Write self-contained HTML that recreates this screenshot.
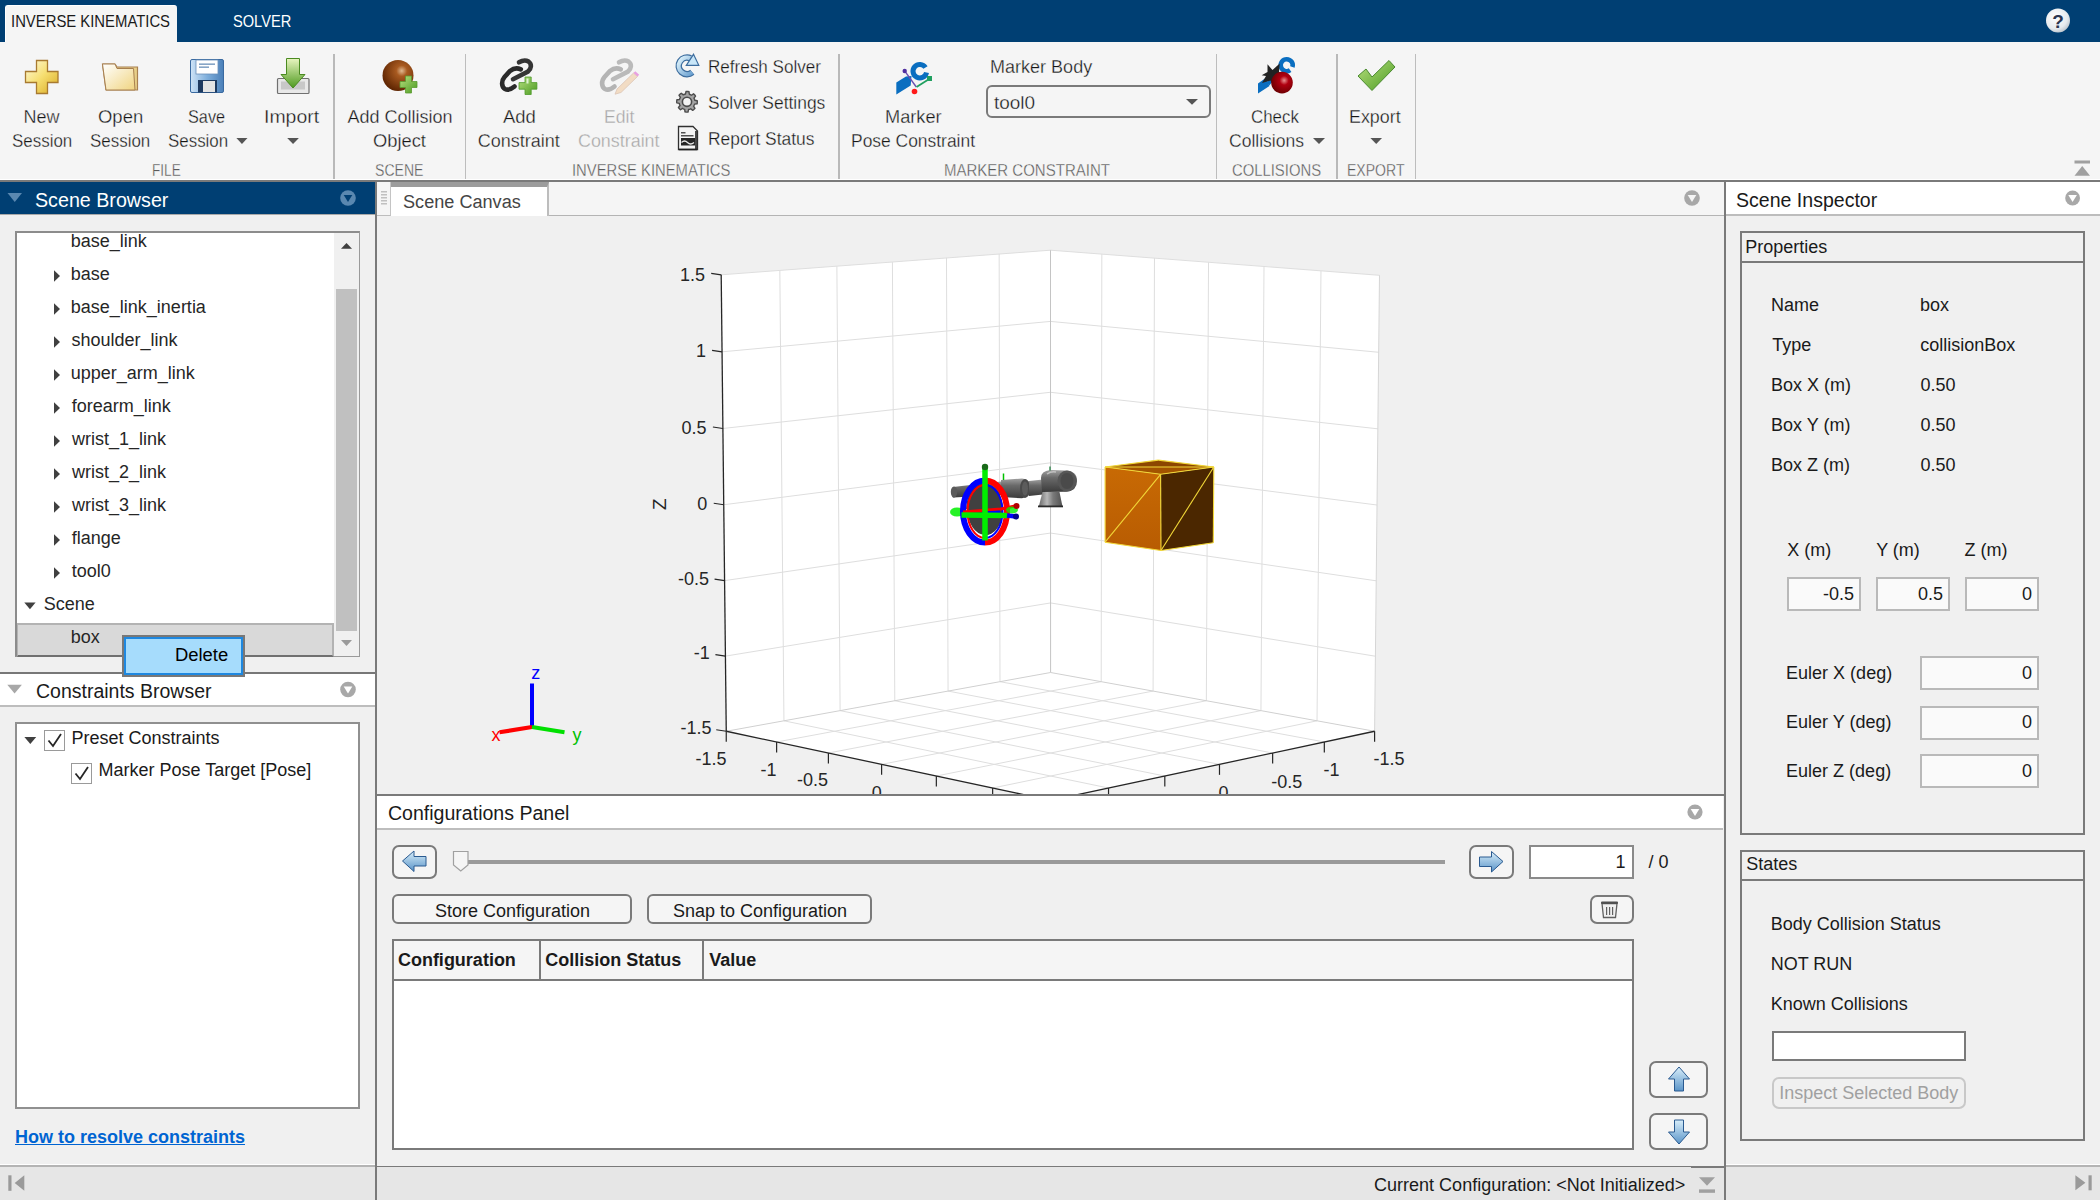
<!DOCTYPE html>
<html><head><meta charset="utf-8"><title>Inverse Kinematics Designer</title>
<style>
html,body{margin:0;padding:0;}
body{width:2100px;height:1200px;position:relative;overflow:hidden;background:#f0f0f0;font-family:"Liberation Sans",sans-serif;}
.a{position:absolute;box-sizing:border-box;}
.t{position:absolute;white-space:nowrap;line-height:1;transform-origin:0 0;}
svg{position:absolute;overflow:visible;}

</style></head><body>
<div class="a" style="left:0px;top:0px;width:2100px;height:42px;background:#003f73;"></div>
<div class="a" style="left:5px;top:5px;width:172px;height:37px;background:#f5f5f5;border-radius:3px 3px 0 0;border-top:1px solid #fff;border-left:1px solid #fff;"></div>
<div class="t" style="left:10.95px;top:13px;font-size:16.5px;color:#1a1a1a;transform:scaleX(0.9002);">INVERSE KINEMATICS</div>
<div class="t" style="left:232.69px;top:13px;font-size:16.5px;color:#ffffff;transform:scaleX(0.8861);">SOLVER</div>
<div class="a" style="left:0px;top:42px;width:2100px;height:137px;background:#f5f5f5;"></div>
<div class="a" style="left:0px;top:179px;width:2100px;height:1px;background:#ffffff;"></div>
<div class="a" style="left:0px;top:180px;width:2100px;height:2px;background:#7a7a7a;"></div>
<div class="a" style="left:333px;top:54px;width:2px;height:125px;background:#b9b9b9;"></div>
<div class="a" style="left:465px;top:54px;width:1px;height:125px;background:#bdbdbd;"></div>
<div class="a" style="left:838px;top:54px;width:2px;height:125px;background:#b9b9b9;"></div>
<div class="a" style="left:1216px;top:54px;width:1px;height:125px;background:#bdbdbd;"></div>
<div class="a" style="left:1336px;top:54px;width:2px;height:125px;background:#b9b9b9;"></div>
<div class="a" style="left:1415px;top:54px;width:1px;height:125px;background:#bdbdbd;"></div>
<div class="t" style="left:23.50px;top:108px;font-size:18px;color:#151515;-webkit-text-stroke:0.3px #f5f5f5;">New</div>
<div class="t" style="left:12.05px;top:132px;font-size:18px;color:#151515;transform:scaleX(0.9404);-webkit-text-stroke:0.3px #f5f5f5;">Session</div>
<div class="t" style="left:97.78px;top:108px;font-size:18px;color:#151515;transform:scaleX(1.0261);-webkit-text-stroke:0.3px #f5f5f5;">Open</div>
<div class="t" style="left:90.25px;top:132px;font-size:18px;color:#151515;transform:scaleX(0.9404);-webkit-text-stroke:0.3px #f5f5f5;">Session</div>
<div class="t" style="left:187.88px;top:108px;font-size:18px;color:#151515;transform:scaleX(0.9036);-webkit-text-stroke:0.3px #f5f5f5;">Save</div>
<div class="t" style="left:168.00px;top:132px;font-size:18px;color:#151515;transform:scaleX(0.9396);-webkit-text-stroke:0.3px #f5f5f5;">Session</div>
<div class="t" style="left:263.77px;top:108px;font-size:18px;color:#151515;transform:scaleX(1.0793);-webkit-text-stroke:0.3px #f5f5f5;">Import</div>
<div class="t" style="left:347.50px;top:108px;font-size:18px;color:#151515;-webkit-text-stroke:0.3px #f5f5f5;">Add Collision</div>
<div class="t" style="left:372.89px;top:132px;font-size:18px;color:#151515;transform:scaleX(1.0176);-webkit-text-stroke:0.3px #f5f5f5;">Object</div>
<div class="t" style="left:503.00px;top:108px;font-size:18px;color:#151515;transform:scaleX(1.0259);-webkit-text-stroke:0.3px #f5f5f5;">Add</div>
<div class="t" style="left:477.80px;top:132px;font-size:18px;color:#151515;-webkit-text-stroke:0.3px #f5f5f5;">Constraint</div>
<div class="t" style="left:603.53px;top:108px;font-size:18px;color:#a6a6a6;transform:scaleX(0.9796);-webkit-text-stroke:0.3px #f5f5f5;">Edit</div>
<div class="t" style="left:578.11px;top:132px;font-size:18px;color:#a6a6a6;transform:scaleX(0.9938);-webkit-text-stroke:0.3px #f5f5f5;">Constraint</div>
<div class="t" style="left:707.58px;top:58px;font-size:18px;color:#151515;transform:scaleX(0.9497);-webkit-text-stroke:0.3px #f5f5f5;">Refresh Solver</div>
<div class="t" style="left:708.22px;top:94px;font-size:18px;color:#151515;transform:scaleX(0.9691);-webkit-text-stroke:0.3px #f5f5f5;">Solver Settings</div>
<div class="t" style="left:707.55px;top:130px;font-size:18px;color:#151515;transform:scaleX(0.9667);-webkit-text-stroke:0.3px #f5f5f5;">Report Status</div>
<div class="t" style="left:885.08px;top:108px;font-size:18px;color:#151515;transform:scaleX(1.0111);-webkit-text-stroke:0.3px #f5f5f5;">Marker</div>
<div class="t" style="left:851.35px;top:132px;font-size:18px;color:#151515;transform:scaleX(0.9684);-webkit-text-stroke:0.3px #f5f5f5;">Pose Constraint</div>
<div class="t" style="left:990.11px;top:58px;font-size:18px;color:#151515;-webkit-text-stroke:0.3px #f5f5f5;">Marker Body</div>
<div class="t" style="left:993.68px;top:94px;font-size:18px;color:#151515;transform:scaleX(1.0526);-webkit-text-stroke:0.3px #f5f5f5;">tool0</div>
<div class="t" style="left:1251.16px;top:108px;font-size:18px;color:#151515;transform:scaleX(0.9381);-webkit-text-stroke:0.3px #f5f5f5;">Check</div>
<div class="t" style="left:1228.92px;top:132px;font-size:18px;color:#151515;transform:scaleX(0.9735);-webkit-text-stroke:0.3px #f5f5f5;">Collisions</div>
<div class="t" style="left:1348.51px;top:108px;font-size:18px;color:#151515;transform:scaleX(0.9921);-webkit-text-stroke:0.3px #f5f5f5;">Export</div>
<div class="t" style="left:152.30px;top:163px;font-size:16px;color:#5a5a5a;transform:scaleX(0.8491);-webkit-text-stroke:0.3px #f5f5f5;">FILE</div>
<div class="t" style="left:375.38px;top:163px;font-size:16px;color:#5a5a5a;transform:scaleX(0.8792);-webkit-text-stroke:0.3px #f5f5f5;">SCENE</div>
<div class="t" style="left:572.31px;top:163px;font-size:16px;color:#5a5a5a;transform:scaleX(0.9249);-webkit-text-stroke:0.3px #f5f5f5;">INVERSE KINEMATICS</div>
<div class="t" style="left:944.28px;top:163px;font-size:16px;color:#5a5a5a;transform:scaleX(0.9378);-webkit-text-stroke:0.3px #f5f5f5;">MARKER CONSTRAINT</div>
<div class="t" style="left:1231.96px;top:163px;font-size:16px;color:#5a5a5a;transform:scaleX(0.9270);-webkit-text-stroke:0.3px #f5f5f5;">COLLISIONS</div>
<div class="t" style="left:1347.06px;top:163px;font-size:16px;color:#5a5a5a;transform:scaleX(0.8777);-webkit-text-stroke:0.3px #f5f5f5;">EXPORT</div>
<div class="a" style="left:986px;top:85px;width:225px;height:33px;border:2px solid #7a7a7a;border-radius:6px;"></div>
<div class="a" style="left:0px;top:182px;width:375px;height:32px;background:#003f73;"></div>
<div class="a" style="left:0px;top:214px;width:375px;height:1px;background:#a9a9a9;"></div>
<div class="t" style="left:35.31px;top:190px;font-size:20px;color:#ffffff;transform:scaleX(0.9836);">Scene Browser</div>
<div class="a" style="left:15px;top:231px;width:345px;height:426px;background:#ffffff;border-top:2px solid #8c8c8c;border-left:2px solid #8c8c8c;border-right:1px solid #9a9a9a;border-bottom:1px solid #9a9a9a;"></div>
<div class="a" style="left:334px;top:233px;width:25px;height:423px;background:#f0f0f0;"></div>
<div class="a" style="left:336px;top:289px;width:21px;height:342px;background:#c0c0c0;"></div>
<div class="a" style="left:17px;top:623px;width:317px;height:34px;background:#d9d9d9;border-top:2px solid #b3b3b3;border-right:2px solid #b3b3b3;border-bottom:2px solid #707070;border-left:1px solid #b3b3b3;"></div>
<div class="t" style="left:70.80px;top:232px;font-size:18px;color:#262626;">base_link</div>
<div class="t" style="left:70.80px;top:265px;font-size:18px;color:#262626;">base</div>
<div class="t" style="left:70.80px;top:298px;font-size:18px;color:#262626;">base_link_inertia</div>
<div class="t" style="left:71.50px;top:331px;font-size:18px;color:#262626;">shoulder_link</div>
<div class="t" style="left:70.80px;top:364px;font-size:18px;color:#262626;">upper_arm_link</div>
<div class="t" style="left:71.80px;top:397px;font-size:18px;color:#262626;">forearm_link</div>
<div class="t" style="left:72.00px;top:430px;font-size:18px;color:#262626;">wrist_1_link</div>
<div class="t" style="left:72.00px;top:463px;font-size:18px;color:#262626;">wrist_2_link</div>
<div class="t" style="left:72.00px;top:496px;font-size:18px;color:#262626;">wrist_3_link</div>
<div class="t" style="left:71.80px;top:529px;font-size:18px;color:#262626;">flange</div>
<div class="t" style="left:71.70px;top:562px;font-size:18px;color:#262626;">tool0</div>
<div class="t" style="left:43.70px;top:595px;font-size:18px;color:#262626;">Scene</div>
<div class="t" style="left:70.70px;top:628px;font-size:18px;color:#262626;">box</div>
<div class="a" style="left:0px;top:672px;width:375px;height:2px;background:#777777;"></div>
<div class="a" style="left:0px;top:674px;width:375px;height:31px;background:#ffffff;"></div>
<div class="a" style="left:0px;top:705px;width:375px;height:2px;background:#bdbdbd;"></div>
<div class="t" style="left:35.83px;top:681px;font-size:20px;color:#1a1a1a;transform:scaleX(0.9748);">Constraints Browser</div>
<div class="a" style="left:15px;top:722px;width:345px;height:387px;background:#ffffff;border:2px solid #909090;"></div>
<div class="a" style="left:44px;top:730px;width:21px;height:21px;background:#ffffff;border:1px solid #9a9a9a;"></div>
<div class="a" style="left:71px;top:763px;width:21px;height:21px;background:#ffffff;border:1px solid #9a9a9a;"></div>
<div class="t" style="left:71.50px;top:729px;font-size:18px;color:#1a1a1a;">Preset Constraints</div>
<div class="t" style="left:98.60px;top:761px;font-size:18px;color:#1a1a1a;">Marker Pose Target [Pose]</div>
<div class="a" style="left:122px;top:635px;width:123px;height:42px;background:#a6dcfc;border:2px solid #787878;box-shadow:inset 0 0 0 2px #1e88e0;"></div>
<div class="t" style="left:175.27px;top:646px;font-size:18px;color:#000000;transform:scaleX(1.0221);">Delete</div>
<div class="t" style="left:15.00px;top:1128px;font-size:18px;color:#0064d2;font-weight:bold;">How to resolve constraints</div>
<div class="a" style="left:15px;top:1144px;width:230px;height:1px;background:#0064d2;"></div>
<div class="a" style="left:0px;top:1164px;width:2100px;height:1px;background:#ffffff;"></div>
<div class="a" style="left:0px;top:1165px;width:2100px;height:2px;background:#b4b4b4;"></div>
<div class="a" style="left:377px;top:1164px;width:1347px;height:2px;background:#f0f0f0;"></div>
<div class="a" style="left:377px;top:1166px;width:1347px;height:1px;background:#7a7a7a;"></div>
<div class="a" style="left:1691px;top:1166px;width:33px;height:2px;background:#7a7a7a;"></div>
<div class="a" style="left:0px;top:1167px;width:2100px;height:33px;background:#e6e6e6;"></div>
<div class="a" style="left:1691px;top:1167px;width:33px;height:1px;background:#7a7a7a;"></div>
<div class="a" style="left:375px;top:182px;width:2px;height:1018px;background:#7a7a7a;"></div>
<div class="a" style="left:1724px;top:182px;width:2px;height:1018px;background:#7a7a7a;"></div>
<div class="t" style="left:1374.10px;top:1176px;font-size:18px;color:#1a1a1a;">Current Configuration: &lt;Not Initialized&gt;</div>
<div class="a" style="left:377px;top:182px;width:1347px;height:33px;background:#f5f5f5;"></div>
<div class="a" style="left:377px;top:215px;width:1347px;height:1px;background:#b4b4b4;"></div>
<div class="a" style="left:377px;top:182px;width:14px;height:34px;background:#f5f5f5;border-right:1px solid #c4c4c4;border-bottom:1px solid #bdbdbd;"></div>
<div class="a" style="left:391px;top:182px;width:158px;height:34px;background:#ffffff;border-top:5px solid #9c9c9c;border-right:2px solid #bdbdbd;"></div>
<div class="t" style="left:402.80px;top:193px;font-size:18px;color:#454545;transform:scaleX(1.0061);">Scene Canvas</div>
<div class="a" style="left:377px;top:216px;width:1347px;height:578px;background:#f0f0f0;"></div>
<div class="a" style="left:377px;top:794px;width:1347px;height:2px;background:#7a7a7a;"></div>
<div class="a" style="left:377px;top:796px;width:1346px;height:32px;background:#ffffff;"></div>
<div class="a" style="left:377px;top:828px;width:1346px;height:2px;background:#bdbdbd;"></div>
<div class="t" style="left:388.42px;top:803px;font-size:20px;color:#1a1a1a;transform:scaleX(0.9771);">Configurations Panel</div>
<div class="a" style="left:392px;top:845px;width:45px;height:34px;background:#f5f5f5;border:2px solid #7a7a7a;border-radius:7px;"></div>
<div class="a" style="left:1469px;top:845px;width:45px;height:34px;background:#f5f5f5;border:2px solid #7a7a7a;border-radius:7px;"></div>
<div class="a" style="left:468px;top:860px;width:977px;height:4px;background:#9a9a9a;"></div>
<div class="a" style="left:1529px;top:845px;width:105px;height:34px;background:#ffffff;border:2px solid #8a8a8a;"></div>
<div class="t" style="left:1615.50px;top:853px;font-size:18px;color:#1a1a1a;">1</div>
<div class="t" style="left:1648.60px;top:853px;font-size:18px;color:#1a1a1a;">/ 0</div>
<div class="a" style="left:392px;top:894px;width:240px;height:30px;background:#f5f5f5;border:2px solid #7a7a7a;border-radius:6px;"></div>
<div class="t" style="left:435.00px;top:902px;font-size:18px;color:#1a1a1a;">Store Configuration</div>
<div class="a" style="left:647px;top:894px;width:225px;height:30px;background:#f5f5f5;border:2px solid #7a7a7a;border-radius:6px;"></div>
<div class="t" style="left:673.00px;top:902px;font-size:18px;color:#1a1a1a;">Snap to Configuration</div>
<div class="a" style="left:1590px;top:895px;width:44px;height:29px;background:#f5f5f5;border:2px solid #7a7a7a;border-radius:7px;"></div>
<div class="a" style="left:392px;top:939px;width:242px;height:211px;background:#ffffff;border:2px solid #7a7a7a;"></div>
<div class="a" style="left:392px;top:939px;width:1242px;height:211px;background:#ffffff;border:2px solid #7a7a7a;"></div>
<div class="a" style="left:394px;top:941px;width:1238px;height:38px;background:#f5f5f5;"></div>
<div class="a" style="left:394px;top:979px;width:1238px;height:2px;background:#7a7a7a;"></div>
<div class="a" style="left:539px;top:941px;width:2px;height:38px;background:#7a7a7a;"></div>
<div class="a" style="left:702px;top:941px;width:2px;height:38px;background:#7a7a7a;"></div>
<div class="t" style="left:397.90px;top:951px;font-size:18px;color:#1a1a1a;font-weight:bold;">Configuration</div>
<div class="t" style="left:545.20px;top:951px;font-size:18px;color:#1a1a1a;font-weight:bold;">Collision Status</div>
<div class="t" style="left:709.20px;top:951px;font-size:18px;color:#1a1a1a;font-weight:bold;">Value</div>
<div class="a" style="left:1649px;top:1061px;width:59px;height:37px;background:#f5f5f5;border:2px solid #7a7a7a;border-radius:7px;"></div>
<div class="a" style="left:1649px;top:1113px;width:59px;height:37px;background:#f5f5f5;border:2px solid #7a7a7a;border-radius:7px;"></div>
<div class="a" style="left:1726px;top:182px;width:374px;height:32px;background:#ffffff;"></div>
<div class="a" style="left:1726px;top:214px;width:374px;height:2px;background:#bdbdbd;"></div>
<div class="t" style="left:1736.42px;top:190px;font-size:20px;color:#1a1a1a;transform:scaleX(0.9770);">Scene Inspector</div>
<div class="a" style="left:1740px;top:231px;width:345px;height:604px;border:2px solid #7a7a7a;"></div>
<div class="a" style="left:1742px;top:261px;width:341px;height:2px;background:#7a7a7a;"></div>
<div class="t" style="left:1745.20px;top:238px;font-size:18px;color:#1a1a1a;">Properties</div>
<div class="t" style="left:1771.10px;top:296px;font-size:18px;color:#1a1a1a;">Name</div>
<div class="t" style="left:1919.90px;top:296px;font-size:18px;color:#1a1a1a;">box</div>
<div class="t" style="left:1772.20px;top:336px;font-size:18px;color:#1a1a1a;">Type</div>
<div class="t" style="left:1920.30px;top:336px;font-size:18px;color:#1a1a1a;">collisionBox</div>
<div class="t" style="left:1771.10px;top:376px;font-size:18px;color:#1a1a1a;">Box X (m)</div>
<div class="t" style="left:1920.40px;top:376px;font-size:18px;color:#1a1a1a;">0.50</div>
<div class="t" style="left:1771.10px;top:416px;font-size:18px;color:#1a1a1a;">Box Y (m)</div>
<div class="t" style="left:1920.40px;top:416px;font-size:18px;color:#1a1a1a;">0.50</div>
<div class="t" style="left:1771.10px;top:456px;font-size:18px;color:#1a1a1a;">Box Z (m)</div>
<div class="t" style="left:1920.40px;top:456px;font-size:18px;color:#1a1a1a;">0.50</div>
<div class="t" style="left:1787.20px;top:541px;font-size:18px;color:#1a1a1a;">X (m)</div>
<div class="t" style="left:1876.20px;top:541px;font-size:18px;color:#1a1a1a;">Y (m)</div>
<div class="t" style="left:1964.40px;top:541px;font-size:18px;color:#1a1a1a;">Z (m)</div>
<div class="a" style="left:1787px;top:577px;width:74px;height:34px;background:#fafafa;border:2px solid #b9b9b9;"></div>
<div class="t" style="left:1823.00px;top:585px;font-size:18px;color:#1a1a1a;">-0.5</div>
<div class="a" style="left:1876px;top:577px;width:74px;height:34px;background:#fafafa;border:2px solid #b9b9b9;"></div>
<div class="t" style="left:1917.90px;top:585px;font-size:18px;color:#1a1a1a;">0.5</div>
<div class="a" style="left:1965px;top:577px;width:74px;height:34px;background:#fafafa;border:2px solid #b9b9b9;"></div>
<div class="t" style="left:2021.90px;top:585px;font-size:18px;color:#1a1a1a;">0</div>
<div class="t" style="left:1786.10px;top:664px;font-size:18px;color:#1a1a1a;">Euler X (deg)</div>
<div class="a" style="left:1920px;top:656px;width:119px;height:34px;background:#fafafa;border:2px solid #b9b9b9;"></div>
<div class="t" style="left:2021.90px;top:664px;font-size:18px;color:#1a1a1a;">0</div>
<div class="t" style="left:1786.10px;top:713px;font-size:18px;color:#1a1a1a;">Euler Y (deg)</div>
<div class="a" style="left:1920px;top:706px;width:119px;height:34px;background:#fafafa;border:2px solid #b9b9b9;"></div>
<div class="t" style="left:2021.90px;top:713px;font-size:18px;color:#1a1a1a;">0</div>
<div class="t" style="left:1786.10px;top:762px;font-size:18px;color:#1a1a1a;">Euler Z (deg)</div>
<div class="a" style="left:1920px;top:754px;width:119px;height:34px;background:#fafafa;border:2px solid #b9b9b9;"></div>
<div class="t" style="left:2021.90px;top:762px;font-size:18px;color:#1a1a1a;">0</div>
<div class="a" style="left:1740px;top:850px;width:345px;height:291px;border:2px solid #7a7a7a;"></div>
<div class="a" style="left:1742px;top:879px;width:341px;height:2px;background:#7a7a7a;"></div>
<div class="t" style="left:1746.20px;top:855px;font-size:18px;color:#1a1a1a;">States</div>
<div class="t" style="left:1770.70px;top:915px;font-size:18px;color:#1a1a1a;">Body Collision Status</div>
<div class="t" style="left:1770.70px;top:955px;font-size:18px;color:#1a1a1a;">NOT RUN</div>
<div class="t" style="left:1770.70px;top:995px;font-size:18px;color:#1a1a1a;">Known Collisions</div>
<div class="a" style="left:1772px;top:1031px;width:194px;height:30px;background:#ffffff;border:2px solid #7a7a7a;"></div>
<div class="a" style="left:1772px;top:1077px;width:194px;height:32px;background:#f0f0f0;border:2px solid #c8c8c8;border-radius:7px;"></div>
<div class="t" style="left:1779.20px;top:1084px;font-size:18px;color:#a0a0a0;">Inspect Selected Body</div>
<svg style="left:0;top:0" width="2100" height="1200" viewBox="0 0 2100 1200" font-family="Liberation Sans">
<defs><clipPath id="cv"><rect x="377" y="216" width="1347" height="578"/></clipPath></defs>
<g clip-path="url(#cv)">
<polygon points="721.20,274.80 1050.50,250.20 1050.60,672.50 726.25,731.25" fill="#ffffff" />
<polygon points="1050.50,250.20 1379.50,275.30 1374.60,731.25 1050.60,672.50" fill="#ffffff" />
<polygon points="1050.60,672.50 726.25,731.25 1050.60,800.38 1374.60,731.25" fill="#ffffff" />
<line x1="721.20" y1="274.80" x2="1050.50" y2="250.20" stroke="#dedede" stroke-width="1" />
<line x1="1050.50" y1="250.20" x2="1379.50" y2="275.30" stroke="#dedede" stroke-width="1" />
<line x1="779.83" y1="270.42" x2="783.94" y2="720.80" stroke="#dedede" stroke-width="1" />
<line x1="1101.83" y1="254.12" x2="1101.20" y2="681.68" stroke="#dedede" stroke-width="1" />
<line x1="722.05" y1="351.84" x2="1050.52" y2="321.41" stroke="#dedede" stroke-width="1" />
<line x1="1050.52" y1="321.42" x2="1378.67" y2="352.27" stroke="#dedede" stroke-width="1" />
<line x1="999.99" y1="681.67" x2="1324.32" y2="741.98" stroke="#dedede" stroke-width="1" />
<line x1="1101.20" y1="681.68" x2="776.62" y2="741.99" stroke="#dedede" stroke-width="1" />
<line x1="836.88" y1="266.16" x2="840.10" y2="710.63" stroke="#dedede" stroke-width="1" />
<line x1="1154.49" y1="258.13" x2="1153.09" y2="691.08" stroke="#dedede" stroke-width="1" />
<line x1="722.90" y1="428.49" x2="1050.53" y2="392.28" stroke="#dedede" stroke-width="1" />
<line x1="1050.53" y1="392.30" x2="1377.85" y2="428.84" stroke="#dedede" stroke-width="1" />
<line x1="948.07" y1="691.07" x2="1272.64" y2="753.00" stroke="#dedede" stroke-width="1" />
<line x1="1153.09" y1="691.08" x2="828.39" y2="753.02" stroke="#dedede" stroke-width="1" />
<line x1="892.41" y1="262.01" x2="894.79" y2="700.72" stroke="#dedede" stroke-width="1" />
<line x1="1208.53" y1="262.26" x2="1206.33" y2="700.74" stroke="#dedede" stroke-width="1" />
<line x1="723.74" y1="504.75" x2="1050.55" y2="462.82" stroke="#dedede" stroke-width="1" />
<line x1="1050.55" y1="462.85" x2="1377.03" y2="505.02" stroke="#dedede" stroke-width="1" />
<line x1="894.79" y1="700.72" x2="1219.49" y2="764.34" stroke="#dedede" stroke-width="1" />
<line x1="1206.33" y1="700.74" x2="881.61" y2="764.36" stroke="#dedede" stroke-width="1" />
<line x1="946.49" y1="257.97" x2="948.07" y2="691.07" stroke="#dedede" stroke-width="1" />
<line x1="1264.01" y1="266.49" x2="1260.95" y2="710.64" stroke="#dedede" stroke-width="1" />
<line x1="724.58" y1="580.63" x2="1050.57" y2="533.04" stroke="#dedede" stroke-width="1" />
<line x1="1050.57" y1="533.06" x2="1376.22" y2="580.82" stroke="#dedede" stroke-width="1" />
<line x1="840.10" y1="710.63" x2="1164.81" y2="776.01" stroke="#dedede" stroke-width="1" />
<line x1="1260.95" y1="710.64" x2="936.34" y2="776.03" stroke="#dedede" stroke-width="1" />
<line x1="999.17" y1="254.03" x2="999.99" y2="681.67" stroke="#dedede" stroke-width="1" />
<line x1="1320.98" y1="270.84" x2="1317.02" y2="720.81" stroke="#dedede" stroke-width="1" />
<line x1="725.42" y1="656.13" x2="1050.58" y2="602.93" stroke="#dedede" stroke-width="1" />
<line x1="1050.58" y1="602.94" x2="1375.41" y2="656.22" stroke="#dedede" stroke-width="1" />
<line x1="783.94" y1="720.80" x2="1108.54" y2="788.02" stroke="#dedede" stroke-width="1" />
<line x1="1317.02" y1="720.81" x2="992.64" y2="788.03" stroke="#dedede" stroke-width="1" />
<line x1="1379.50" y1="275.30" x2="1374.60" y2="731.25" stroke="#d6d6d6" stroke-width="1" />
<line x1="1050.50" y1="250.20" x2="1050.60" y2="672.50" stroke="#c4c4c4" stroke-width="1" />
<line x1="1050.60" y1="672.50" x2="726.25" y2="731.25" stroke="#d0d0d0" stroke-width="1" />
<line x1="1050.60" y1="672.50" x2="1374.60" y2="731.25" stroke="#d0d0d0" stroke-width="1" />
<line x1="721.20" y1="274.80" x2="726.25" y2="731.25" stroke="#262626" stroke-width="1.3" />
<line x1="726.25" y1="731.25" x2="1050.60" y2="800.38" stroke="#262626" stroke-width="1.3" />
<line x1="1374.60" y1="731.25" x2="1050.60" y2="800.38" stroke="#262626" stroke-width="1.3" />
<line x1="721.20" y1="274.80" x2="711.20" y2="273.30" stroke="#262626" stroke-width="1.2" />
<line x1="722.05" y1="351.84" x2="712.05" y2="350.34" stroke="#262626" stroke-width="1.2" />
<line x1="722.90" y1="428.49" x2="712.90" y2="426.99" stroke="#262626" stroke-width="1.2" />
<line x1="723.74" y1="504.75" x2="713.74" y2="503.25" stroke="#262626" stroke-width="1.2" />
<line x1="724.58" y1="580.63" x2="714.58" y2="579.13" stroke="#262626" stroke-width="1.2" />
<line x1="725.42" y1="656.13" x2="715.42" y2="654.63" stroke="#262626" stroke-width="1.2" />
<line x1="726.25" y1="731.25" x2="716.25" y2="729.75" stroke="#262626" stroke-width="1.2" />
<line x1="726.25" y1="731.25" x2="726.25" y2="741.75" stroke="#262626" stroke-width="1.2" />
<line x1="1374.60" y1="731.25" x2="1374.60" y2="741.75" stroke="#262626" stroke-width="1.2" />
<line x1="776.62" y1="741.99" x2="776.62" y2="752.49" stroke="#262626" stroke-width="1.2" />
<line x1="1324.32" y1="741.98" x2="1324.32" y2="752.48" stroke="#262626" stroke-width="1.2" />
<line x1="828.39" y1="753.02" x2="828.39" y2="763.52" stroke="#262626" stroke-width="1.2" />
<line x1="1272.64" y1="753.00" x2="1272.64" y2="763.50" stroke="#262626" stroke-width="1.2" />
<line x1="881.61" y1="764.36" x2="881.61" y2="774.86" stroke="#262626" stroke-width="1.2" />
<line x1="1219.49" y1="764.34" x2="1219.49" y2="774.84" stroke="#262626" stroke-width="1.2" />
<line x1="936.34" y1="776.03" x2="936.34" y2="786.53" stroke="#262626" stroke-width="1.2" />
<line x1="1164.81" y1="776.01" x2="1164.81" y2="786.51" stroke="#262626" stroke-width="1.2" />
<line x1="992.64" y1="788.03" x2="992.64" y2="798.53" stroke="#262626" stroke-width="1.2" />
<line x1="1108.54" y1="788.02" x2="1108.54" y2="798.52" stroke="#262626" stroke-width="1.2" />
<line x1="1050.60" y1="800.38" x2="1050.60" y2="810.88" stroke="#262626" stroke-width="1.2" />
<line x1="1050.60" y1="800.38" x2="1050.60" y2="810.88" stroke="#262626" stroke-width="1.2" />
<text x="680.00" y="281.00" font-size="18" fill="#262626" >1.5</text>
<text x="695.90" y="357.30" font-size="18" fill="#262626" >1</text>
<text x="681.50" y="433.80" font-size="18" fill="#262626" >0.5</text>
<text x="697.20" y="510.20" font-size="18" fill="#262626" >0</text>
<text x="678.00" y="584.60" font-size="18" fill="#262626" >-0.5</text>
<text x="693.70" y="659.00" font-size="18" fill="#262626" >-1</text>
<text x="680.40" y="734.20" font-size="18" fill="#262626" >-1.5</text>
<text x="695.45" y="764.60" font-size="18" fill="#262626" >-1.5</text>
<text x="760.45" y="775.80" font-size="18" fill="#262626" >-1</text>
<text x="797.00" y="786.30" font-size="18" fill="#262626" >-0.5</text>
<text x="871.80" y="798.50" font-size="18" fill="#262626" >0</text>
<text x="1373.40" y="764.60" font-size="18" fill="#262626" >-1.5</text>
<text x="1323.40" y="775.80" font-size="18" fill="#262626" >-1</text>
<text x="1271.20" y="787.50" font-size="18" fill="#262626" >-0.5</text>
<text x="1218.60" y="798.50" font-size="18" fill="#262626" >0</text>
<text x="0" y="0" font-size="19" fill="#262626" transform="translate(665.8,510) rotate(-90)">Z</text>
<line x1="532.00" y1="683.50" x2="532.00" y2="727.50" stroke="#0000ff" stroke-width="4" />
<line x1="532.00" y1="727.00" x2="499.50" y2="732.20" stroke="#ff0000" stroke-width="4.2" />
<line x1="532.00" y1="727.00" x2="564.50" y2="732.20" stroke="#00e000" stroke-width="4.2" />
<text x="531.30" y="679.40" font-size="18" fill="#0000ff" >z</text>
<text x="491.40" y="740.80" font-size="18" fill="#ff0000" >x</text>
<text x="572.40" y="740.80" font-size="18" fill="#00c000" >y</text>
<defs><linearGradient id="lf" x1="0" y1="0" x2="0" y2="1"><stop offset="0" stop-color="#c86a04"/><stop offset="1" stop-color="#b85c02"/></linearGradient></defs>
<polygon points="1105.10,467.00 1160.60,474.30 1161.00,550.50 1105.10,542.20" fill="url(#lf)" />
<polygon points="1160.60,474.30 1213.80,467.00 1213.30,542.70 1161.00,550.50" fill="#4b2700" />
<polygon points="1105.10,467.00 1158.30,460.10 1213.80,467.00" fill="#8c4600" />
<polygon points="1105.10,467.00 1213.80,467.00 1160.60,474.30" fill="#a35400" />
<line x1="1105.10" y1="467.00" x2="1158.30" y2="460.10" stroke="#f2d838" stroke-width="1.1" />
<line x1="1158.30" y1="460.10" x2="1213.80" y2="467.00" stroke="#f2d838" stroke-width="1.1" />
<line x1="1213.80" y1="467.00" x2="1160.60" y2="474.30" stroke="#f2d838" stroke-width="1.1" />
<line x1="1160.60" y1="474.30" x2="1105.10" y2="467.00" stroke="#f2d838" stroke-width="1.1" />
<line x1="1105.10" y1="467.00" x2="1105.10" y2="542.20" stroke="#f2d838" stroke-width="1.1" />
<line x1="1105.10" y1="542.20" x2="1161.00" y2="550.50" stroke="#f2d838" stroke-width="1.1" />
<line x1="1161.00" y1="550.50" x2="1213.30" y2="542.70" stroke="#f2d838" stroke-width="1.1" />
<line x1="1213.30" y1="542.70" x2="1213.80" y2="467.00" stroke="#f2d838" stroke-width="1.1" />
<line x1="1160.60" y1="474.30" x2="1161.00" y2="550.50" stroke="#f2d838" stroke-width="1.1" />
<line x1="1105.10" y1="542.20" x2="1160.60" y2="474.30" stroke="#f2d838" stroke-width="1.1" />
<line x1="1161.00" y1="550.50" x2="1213.80" y2="467.00" stroke="#f2d838" stroke-width="1.1" />
<line x1="1105.10" y1="467.00" x2="1213.80" y2="467.00" stroke="#f2d838" stroke-width="1.1" />
<defs><linearGradient id="rg" x1="0" y1="0" x2="0" y2="1"><stop offset="0" stop-color="#a0a0a0"/><stop offset="0.35" stop-color="#6a6a6a"/><stop offset="1" stop-color="#3c3c3c"/></linearGradient><linearGradient id="rb" x1="0" y1="0" x2="1" y2="0"><stop offset="0" stop-color="#6a6a6a"/><stop offset="0.35" stop-color="#b8b8b8"/><stop offset="0.6" stop-color="#7a7a7a"/><stop offset="1" stop-color="#505050"/></linearGradient></defs>
<path d="M953,487 Q950,492 953,497.5 L1001,495 L1001,481.5 Z" fill="url(#rg)"/>
<ellipse cx="954" cy="492" rx="3.2" ry="5.5" fill="#5a5a5a"/>
<path d="M1001,480 L1022,478.5 Q1031,479 1031,488 Q1031,497 1022,498.3 L1001,497 Z" fill="url(#rg)"/>
<ellipse cx="1025" cy="488.5" rx="5" ry="9.5" fill="#4a4a4a"/>
<ellipse cx="1025" cy="488.5" rx="3" ry="7" fill="#5c5c5c"/>
<path d="M1029,481 L1043,479.5 L1043,494.5 L1029,496 Z" fill="url(#rg)"/>
<path d="M1041,478 Q1041,471 1050,470 L1066,470.5 Q1077,471 1077,481 Q1077,491 1066,491.7 L1042,492 Z" fill="url(#rg)"/>
<ellipse cx="1067" cy="481" rx="9.5" ry="10.5" fill="#565656"/>
<ellipse cx="1067" cy="481" rx="6.5" ry="8" fill="#4a4a4a"/>
<path d="M1047,474 Q1051,471 1056,472" fill="none" stroke="#c0c0c0" stroke-width="1.5"/>
<path d="M1042.5,492 L1059.5,492 L1062.5,506.5 L1038.8,506.5 Z" fill="url(#rb)"/>
<rect x="1038" y="505.5" width="25" height="1.8" fill="#2a2a2a"/>
<line x1="1003.50" y1="473.50" x2="1003.50" y2="480.00" stroke="#00c000" stroke-width="1.5" />
<line x1="1050.00" y1="466.50" x2="1050.00" y2="470.50" stroke="#208040" stroke-width="1.3" />
<ellipse cx="984.5" cy="509.5" rx="18.5" ry="26" fill="#404040"/>
<path d="M966.5,509 A18,26 0 0 0 984.5,535.5" fill="none" stroke="#ffffff" stroke-width="2"/>
<ellipse cx="957" cy="512" rx="7" ry="4.6" fill="#00ee00" opacity="0.85"/>
<path d="M985,480.5 A22,31 0 0 0 985,542.5" fill="none" stroke="#0000ff" stroke-width="6"/>
<path d="M985,480.5 A22,31 0 0 1 985,542.5" fill="none" stroke="#ff0000" stroke-width="6"/>
<path d="M985,485 A17.5,26.5 0 0 0 985,538" fill="none" stroke="#ff0000" stroke-width="2"/>
<path d="M985,485 A17.5,26.5 0 0 1 985,538" fill="none" stroke="#0000ff" stroke-width="2"/>
<path d="M963,512 L1001,509 L1015,506" fill="none" stroke="#ff0000" stroke-width="3"/>
<ellipse cx="1012" cy="510" rx="6" ry="3.5" fill="#00ee00" opacity="0.8"/>
<circle cx="1016.5" cy="506" r="3" fill="#b00000"/>
<line x1="982.00" y1="513.00" x2="1000.00" y2="512.00" stroke="#0000ff" stroke-width="3" />
<line x1="961.50" y1="515.00" x2="1007.50" y2="515.50" stroke="#00ee00" stroke-width="5.5" />
<line x1="1007.00" y1="515.50" x2="1016.00" y2="516.50" stroke="#0000ff" stroke-width="4.5" />
<circle cx="1016" cy="516.5" r="3" fill="#000090"/>
<line x1="985.00" y1="467.00" x2="985.00" y2="540.50" stroke="#00ee00" stroke-width="5.5" />
<circle cx="985" cy="467" r="3.2" fill="#1a6a1a"/>
</g></svg>
<svg style="left:0;top:0" width="2100" height="1200" viewBox="0 0 2100 1200">
<defs>
<linearGradient id="gy" x1="0" y1="0" x2="1" y2="1"><stop offset="0" stop-color="#fffbe0"/><stop offset="0.5" stop-color="#f6de70"/><stop offset="1" stop-color="#d8a820"/></linearGradient>
<linearGradient id="gf" x1="0" y1="0" x2="1" y2="1"><stop offset="0" stop-color="#ffffff"/><stop offset="1" stop-color="#f0d480"/></linearGradient>
<linearGradient id="gb" x1="0" y1="0" x2="1" y2="0"><stop offset="0" stop-color="#cfe4f7"/><stop offset="0.5" stop-color="#7fafdc"/><stop offset="1" stop-color="#4a7fb8"/></linearGradient>
<linearGradient id="gg" x1="0" y1="0" x2="0" y2="1"><stop offset="0" stop-color="#e8f5c0"/><stop offset="1" stop-color="#4e9a1e"/></linearGradient>
<linearGradient id="gc" x1="0" y1="0" x2="1" y2="1"><stop offset="0" stop-color="#b8e080"/><stop offset="1" stop-color="#4a9a20"/></linearGradient>
<radialGradient id="gs" cx="0.62" cy="0.35" r="0.7"><stop offset="0" stop-color="#e0b890"/><stop offset="0.25" stop-color="#a85a20"/><stop offset="1" stop-color="#5a2200"/></radialGradient>
<radialGradient id="gr" cx="0.6" cy="0.4" r="0.7"><stop offset="0" stop-color="#e89090"/><stop offset="0.3" stop-color="#b00010"/><stop offset="1" stop-color="#600000"/></radialGradient>
<linearGradient id="grf" x1="0" y1="0" x2="1" y2="1"><stop offset="0" stop-color="#e0f4fc"/><stop offset="1" stop-color="#6aa0d0"/></linearGradient>
<linearGradient id="ga" x1="0" y1="0" x2="0" y2="1"><stop offset="0" stop-color="#d8eefa"/><stop offset="1" stop-color="#5a94c8"/></linearGradient>
<radialGradient id="gh" cx="0.4" cy="0.35" r="0.7"><stop offset="0" stop-color="#ffffff"/><stop offset="0.7" stop-color="#e6eaee"/><stop offset="1" stop-color="#b8c0c8"/></radialGradient>
</defs>
<path d="M36.5,60.5 H47.5 V71.5 H58 V82.5 H47.5 V93.5 H36.5 V82.5 H25.5 V71.5 H36.5 Z" fill="url(#gy)" stroke="#a87a30" stroke-width="1.3"/>
<path d="M102.5,64 H115 L117,67 H137.5 V90 H106 Z" fill="#e8cf88" stroke="#a88050" stroke-width="1.2"/>
<path d="M102.5,64 H115 L117,68.5 H133.5 L135,90 H106 Z" fill="url(#gf)" stroke="#a88050" stroke-width="1"/>
<rect x="190.5" y="59.5" width="33" height="33" rx="1.5" fill="url(#gb)" stroke="#3a6aa0" stroke-width="1"/>
<rect x="196" y="60" width="22" height="14" fill="#ffffff" stroke="#6a90b8" stroke-width="0.8"/>
<rect x="199" y="63.5" width="16" height="1.3" fill="#6a90b8"/><rect x="199" y="66.5" width="10" height="1.3" fill="#6a90b8"/>
<rect x="198" y="80" width="19" height="12.5" fill="#1e3a60"/><rect x="203" y="81" width="12" height="11" fill="#e4e4e4"/>
<rect x="277.5" y="78.5" width="31.5" height="15" rx="1" fill="#e8e8e8" stroke="#707070" stroke-width="1.2"/>
<rect x="281" y="81.5" width="24" height="8" fill="#c8c8c8"/>
<path d="M286.5,58.5 H299.5 V74.5 H305 L293,88 L281,74.5 H286.5 Z" fill="url(#gg)" stroke="#4a8a20" stroke-width="1"/>
<circle cx="398" cy="75.5" r="15.5" fill="url(#gs)"/>
<path d="M405.5,76 H411.5 V81.5 H417 V87.5 H411.5 V93 H405.5 V87.5 H400 V81.5 H405.5 Z" fill="url(#gc)" stroke="#5a9a30" stroke-width="0.8"/>
<g transform="translate(0,0)"><path d="M519,62.3 C522,60.5 526,60 528.5,61.5 C532,64 531.5,68.5 528,71.5 L513,79.2" fill="none" stroke="#353535" stroke-width="4.6" stroke-linecap="round"/><path d="M520.8,69.3 C517,67.5 513,68.5 510,71 L504.5,77 C501,81 501.5,87 505,89 C508,90.5 511.5,89 514.5,86.5" fill="none" stroke="#2a2a2a" stroke-width="4.6" stroke-linecap="round"/></g>
<path d="M525,77 H531.2 V82.6 H536.9 V89.2 H531.2 V94.5 H525 V89.2 H519 V82.6 H525 Z" fill="url(#gc)" stroke="#4e9a2a" stroke-width="0.8"/>
<rect x="526.5" y="78.5" width="2" height="5" fill="#f0fff0" opacity="0.8"/>
<g transform="translate(100,0)"><path d="M519,62.3 C522,60.5 526,60 528.5,61.5 C532,64 531.5,68.5 528,71.5 L513,79.2" fill="none" stroke="#bababa" stroke-width="4.6" stroke-linecap="round"/><path d="M520.8,69.3 C517,67.5 513,68.5 510,71 L504.5,77 C501,81 501.5,87 505,89 C508,90.5 511.5,89 514.5,86.5" fill="none" stroke="#b4b4b4" stroke-width="4.6" stroke-linecap="round"/></g>
<path d="M615,94.2 L617,89 L633.5,73 L637.5,76.5 L621,92.5 Z" fill="#f2dcc4" stroke="#d8c0b0" stroke-width="0.7"/>
<path d="M633.5,73 L635.3,71.2 L639.2,74.8 L637.5,76.5 Z" fill="#e8a0e0"/>
<path d="M690.5,58.3 A8.3,8.3 0 1 0 692.3,72.3" fill="none" stroke="#3d6d9e" stroke-width="6.6"/>
<path d="M690.5,58.3 A8.3,8.3 0 1 0 692.3,72.3" fill="none" stroke="url(#grf)" stroke-width="4.2"/>
<polygon points="693.5,54.3 698.8,65.3 686.3,65.3" fill="#c8e6f8" stroke="#3d6d9e" stroke-width="1.2"/>
<polygon points="697.30,101.80 697.25,102.81 697.10,103.81 694.56,104.09 694.30,104.82 693.97,105.52 693.57,106.19 694.96,108.33 694.28,109.08 693.53,109.76 692.72,110.36 690.72,108.77 690.02,109.10 689.29,109.36 688.54,109.55 688.01,112.05 687.00,112.10 685.99,112.05 684.99,111.90 684.71,109.36 683.98,109.10 683.28,108.77 682.61,108.37 680.47,109.76 679.72,109.08 679.04,108.33 678.44,107.52 680.03,105.52 679.70,104.82 679.44,104.09 679.25,103.34 676.75,102.81 676.70,101.80 676.75,100.79 676.90,99.79 679.44,99.51 679.70,98.78 680.03,98.08 680.43,97.41 679.04,95.27 679.72,94.52 680.47,93.84 681.28,93.24 683.28,94.83 683.98,94.50 684.71,94.24 685.46,94.05 685.99,91.55 687.00,91.50 688.01,91.55 689.01,91.70 689.29,94.24 690.02,94.50 690.72,94.83 691.39,95.23 693.53,93.84 694.28,94.52 694.96,95.27 695.56,96.08 693.97,98.08 694.30,98.78 694.56,99.51 694.75,100.26 697.25,100.79" fill="#a4a4a4" stroke="#4c4c4c" stroke-width="1.4" stroke-linejoin="round"/>
<circle cx="687" cy="101.8" r="4.6" fill="#f4f4f4" stroke="#4c4c4c" stroke-width="1.6"/>
<path d="M678.5,126.5 H693 L697.5,131 V149.5 H678.5 Z" fill="#f4f4f4" stroke="#303030" stroke-width="1.3"/>
<path d="M696,131 V150 M679,149.5 H697" stroke="#202020" stroke-width="1.6"/>
<rect x="681" y="138" width="14" height="7.5" fill="#262626"/>
<path d="M681.5,142.5 q3,-3 6,0 t6.5,0" fill="none" stroke="#e8e8e8" stroke-width="1.3"/>
<rect x="681" y="132" width="4.5" height="1.5" fill="#505050"/><rect x="681" y="135" width="12.5" height="1.5" fill="#505050"/>
<polygon points="896.3,82.5 906,76.5 911.5,76 910.7,85.5 896.3,94.5" fill="#0a6ec0"/>
<path d="M925.5,67.5 A6.8,6.8 0 1 0 926.5,72.5" fill="none" stroke="#0a6ec0" stroke-width="5"/>
<path d="M905,71.3 L916.3,87" stroke="#6a50b0" stroke-width="1.4"/><circle cx="904.7" cy="71" r="2.2" fill="#5030a0"/>
<path d="M916.5,87 L930,78.5" stroke="#20a060" stroke-width="1.8"/><rect x="927" y="76" width="5" height="5" fill="#20a060"/>
<circle cx="914.5" cy="91.5" r="2.8" fill="#ff1a1a"/>
<polygon points="1258,83.5 1266,77.8 1269.5,86 1258,93.6" fill="#0a6ec0"/>
<path d="M1290.5,70 A6,6 0 1 0 1287,71.5" fill="none" stroke="#0a6ec0" stroke-width="4.6" transform="rotate(-30 1286 65)"/>
<path d="M1278,72 L1268,84" stroke="#0a6ec0" stroke-width="4"/>
<polygon points="1267.5,64.3 1272.5,70 1279.7,63.5 1279,72 1286,74 1278,80 1275,88 1270.5,80.5 1262,83 1266,76 1261.7,75.3 1267.5,72" fill="#222222"/>
<circle cx="1282" cy="82.6" r="10.8" fill="url(#gr)"/>
<path d="M1358,76 L1366,69 L1372,77 L1389,60.5 L1395,67 L1372,90.5 Z" fill="url(#gc)" stroke="#4a8a30" stroke-width="1"/>
<polygon points="236.4,138 247.5,138 241.95,144" fill="#555555"/>
<polygon points="287.2,138 298.9,138 293.04999999999995,144" fill="#555555"/>
<polygon points="1313,138 1325,138 1319.0,144" fill="#555555"/>
<polygon points="1370.4,138 1382,138 1376.2,144" fill="#555555"/>
<polygon points="1186,99 1198,99 1192.0,104.7" fill="#555555"/>
<circle cx="2058" cy="20.6" r="12" fill="url(#gh)"/>
<text x="2058" y="27.5" font-family="Liberation Sans" font-weight="bold" font-size="19" fill="#2a3550" text-anchor="middle">?</text>
<rect x="2074.5" y="160.5" width="15.5" height="3" fill="#a0a0a0"/>
<polygon points="2074.5,175.75 2090,175.75 2082.25,166" fill="#a0a0a0"/>
<polygon points="7.5,193 22,193 14.75,202" fill="#5a88b0"/>
<circle cx="348" cy="198" r="7.8" fill="#5a88b0"/><polygon points="343.7,195 352.3,195 348,202" fill="#003f73"/>
<polygon points="7.3,684.7 21.9,684.7 14.6,693.4" fill="#a8a8a8"/>
<circle cx="348" cy="689.5" r="7.8" fill="#a8a8a8"/><polygon points="343.7,686.5 352.3,686.5 348,693.5" fill="#ffffff"/>
<circle cx="1692" cy="198" r="7.8" fill="#a8a8a8"/><polygon points="1687.7,195 1696.3,195 1692,202" fill="#f5f5f5"/>
<circle cx="2072.6" cy="198" r="7.4" fill="#a8a8a8"/><polygon points="2068.2999999999997,195 2076.9,195 2072.6,202" fill="#ffffff"/>
<circle cx="1695" cy="812" r="7.6" fill="#a8a8a8"/><polygon points="1690.7,809 1699.3,809 1695,816" fill="#ffffff"/>
<polygon points="54,270.2 60,276.0 54,281.8" fill="#404040"/>
<polygon points="54,303.2 60,309.0 54,314.8" fill="#404040"/>
<polygon points="54,336.2 60,342.0 54,347.8" fill="#404040"/>
<polygon points="54,369.2 60,375.0 54,380.8" fill="#404040"/>
<polygon points="54,402.2 60,408.0 54,413.8" fill="#404040"/>
<polygon points="54,435.2 60,441.0 54,446.8" fill="#404040"/>
<polygon points="54,468.2 60,474.0 54,479.8" fill="#404040"/>
<polygon points="54,501.2 60,507.0 54,512.8" fill="#404040"/>
<polygon points="54,534.2 60,540.0 54,545.8" fill="#404040"/>
<polygon points="54,567.2 60,573.0 54,578.8" fill="#404040"/>
<polygon points="24.3,602.6 35.6,602.6 29.950000000000003,609.2" fill="#404040"/>
<polygon points="24.4,736.9 36.2,736.9 30.3,744.1" fill="#404040"/>
<path d="M48.5,740.5 L53,746 L61,734" fill="none" stroke="#262626" stroke-width="1.8"/>
<path d="M75.5,773.5 L80,779 L88,767" fill="none" stroke="#262626" stroke-width="1.8"/>
<polygon points="341,248.7 352,248.7 346.5,243" fill="#404040"/>
<polygon points="341,640 352,640 346.5,646" fill="#9a9a9a"/>
<rect x="381" y="191" width="6" height="1.5" fill="#c0c0c0"/>
<rect x="381" y="194" width="6" height="1.5" fill="#c0c0c0"/>
<rect x="381" y="197" width="6" height="1.5" fill="#c0c0c0"/>
<rect x="381" y="200" width="6" height="1.5" fill="#c0c0c0"/>
<rect x="381" y="203" width="6" height="1.5" fill="#c0c0c0"/>
<path d="M402.5,861 L414,851 V856.5 H426 V866 H414 V871.5 Z" fill="url(#ga)" stroke="#2a5a90" stroke-width="1"/>
<path d="M1503,861.5 L1491.5,851.5 V857 H1479.5 V866.5 H1491.5 V872 Z" fill="url(#ga)" stroke="#2a5a90" stroke-width="1"/>
<path d="M453.5,851.5 H468 V865 L460.75,871 L453.5,865 Z" fill="#f5f5f5" stroke="#a0a0a0" stroke-width="1.2"/>
<path d="M1602,903.5 H1617 L1615.5,917.5 H1603.5 Z" fill="#f0f0f0" stroke="#606060" stroke-width="1.3"/>
<rect x="1601" y="901.5" width="17" height="2.5" rx="1" fill="#505050"/>
<rect x="1606" y="907" width="1.2" height="8" fill="#606060"/><rect x="1609" y="907" width="1.2" height="8" fill="#606060"/><rect x="1612" y="907" width="1.2" height="8" fill="#606060"/>
<path d="M1679,1067 L1689.5,1079 H1683.5 V1091 H1674.5 V1079 H1668.5 Z" fill="url(#ga)" stroke="#2a5a90" stroke-width="1"/>
<path d="M1679,1144 L1689.5,1132 H1683.5 V1120 H1674.5 V1132 H1668.5 Z" fill="url(#ga)" stroke="#2a5a90" stroke-width="1"/>
<rect x="8.3" y="1175.3" width="3.2" height="15.5" fill="#9a9a9a"/>
<polygon points="24.3,1175.3 24.3,1190.8 14.7,1183" fill="#9a9a9a"/>
<rect x="2088.5" y="1175.3" width="3.2" height="15" fill="#9a9a9a"/>
<polygon points="2075.4,1175.3 2075.4,1190.3 2085.4,1182.8" fill="#9a9a9a"/>
<polygon points="1699,1177.3 1715,1177.3 1707.0,1185.7" fill="#a0a0a0"/>
<rect x="1699" y="1189.4" width="16" height="3.4" fill="#a0a0a0"/>
</svg>
</body></html>
